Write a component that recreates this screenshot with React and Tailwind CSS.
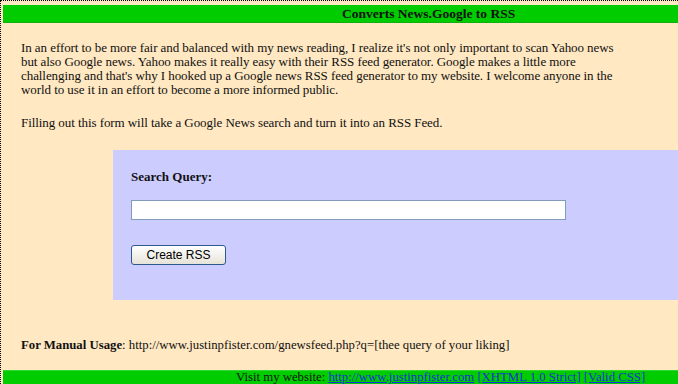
export default function App() {
  return (
    <div className="h-[384px] w-[678px] overflow-hidden bg-[#ffe8c2] border-l border-t border-dotted border-black font-['Liberation_Serif',serif] text-[#111] flex flex-col">
      <div className="ml-[2px] mt-[4px] h-[18px] bg-[#00cc00] border-b border-[#10b010] pl-[339px] text-[13.5px] font-bold leading-[17px] text-[#111]">
        Converts News.Google to RSS
      </div>
      <div className="pl-[20px] pr-[48px] pt-[18px] text-[13px] leading-[14px] tracking-[-0.07px]">
        <p>
          In an effort to be more fair and balanced with my news reading, I realize it's not only important to scan Yahoo news but also Google news. Yahoo makes it really easy with their RSS feed generator. Google makes a little more challenging and that's why I hooked up a Google news RSS feed generator to my website. I welcome anyone in the world to use it in an effort to become a more informed public.
        </p>
        <p className="mt-[19px]">Filling out this form will take a Google News search and turn it into an RSS Feed.</p>
      </div>
      <div className="ml-[112px] mt-[20px] h-[151px] bg-[#ccccff] pl-[18px] pt-[20px]">
        <div className="text-[13px] font-bold leading-[14px]">Search Query:</div>
        <input type="text" className="mt-[16px] block h-[20px] w-[435px] border border-[#7f9db9] bg-white" />
        <button className="mt-[25px] block h-[20px] w-[95px] rounded-[3px] border border-[#2c5a8c] bg-gradient-to-b from-white to-[#e6e3d8] font-['Liberation_Sans',sans-serif] text-[12px] leading-[18px] text-black">
          Create RSS
        </button>
      </div>
      <div className="pl-[20px] pt-[38px] text-[12.75px] leading-[14px]">
        <b>For Manual Usage</b>: http://www.justinpfister.com/gnewsfeed.php?q=[thee query of your liking]
      </div>
      <div className="ml-[2px] mt-[18px] flex-1 bg-[#00cc00] border-t border-[#30d830] pl-[233px] text-[12.75px] leading-[13px] text-[#111]">
        Visit my website: <span className="text-[#1a2fd8] underline">http://www.justinpfister.com</span> <span className="text-[#1a2fd8] underline">[XHTML 1.0 Strict]</span> <span className="text-[#1a2fd8] underline">[Valid CSS]</span>
      </div>
    </div>
  );
}
